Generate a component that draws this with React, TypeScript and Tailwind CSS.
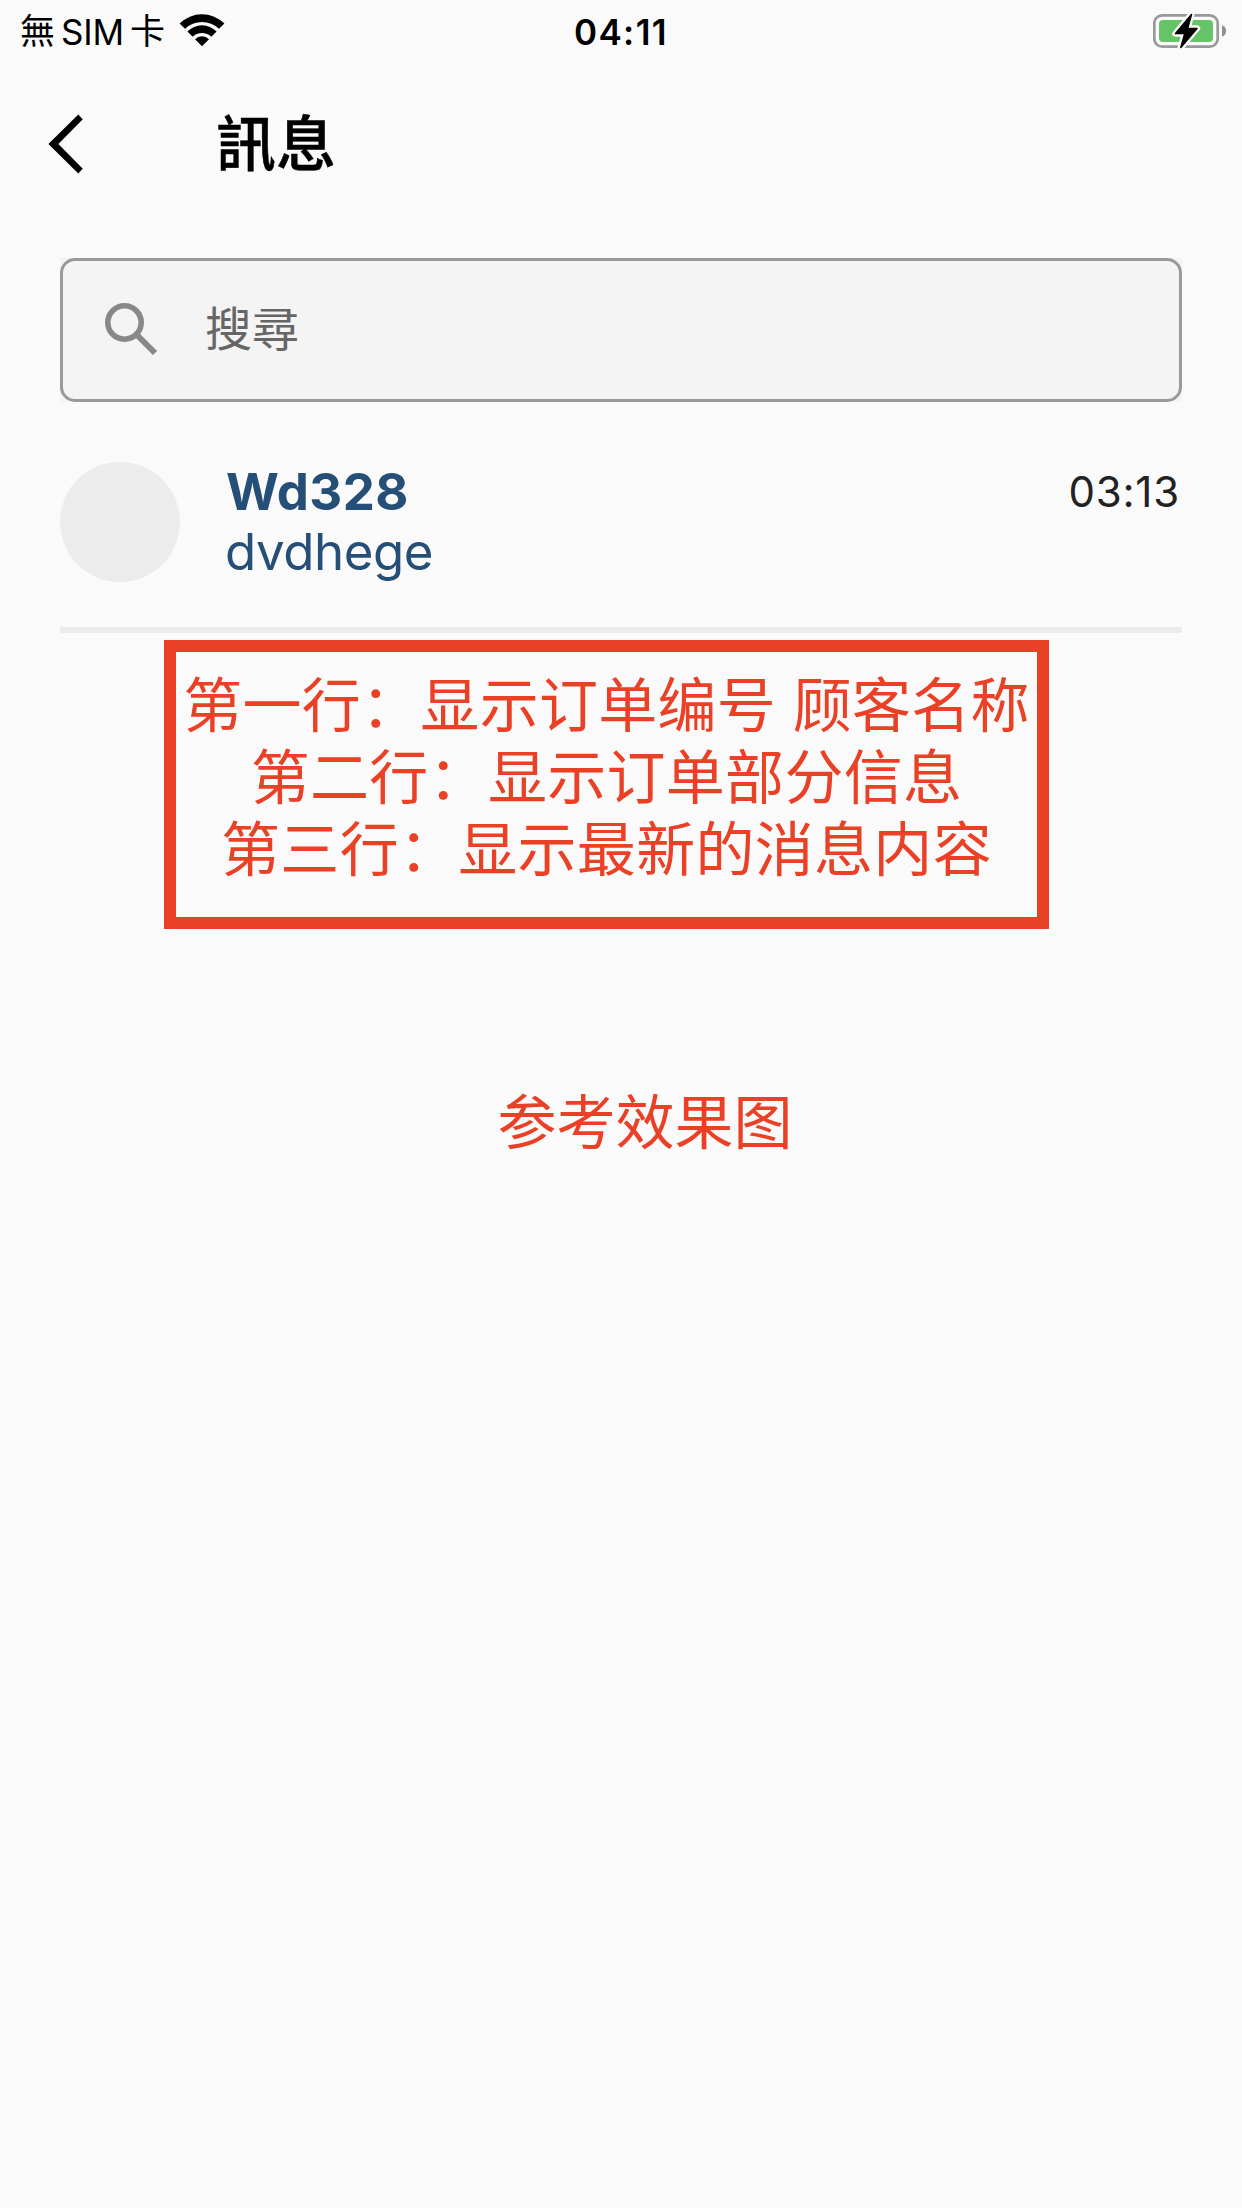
interface Message {
  name: string;
  preview: string;
  time: string;
}

const messages: Message[] = [{ name: 'Wd328', preview: 'dvdhege', time: '03:13' }];

const notes = ['第一行：显示订单编号 顾客名称', '第二行：显示订单部分信息', '第三行：显示最新的消息内容'];

function WifiIcon() {
  return (
    <svg width="46" height="34" viewBox="0 0 46 34" className="ml-[14px]">
      <path d="M.6 9.6A31.5 31.5 0 0 1 45.4 9.6L40 14.8A24.4 24.4 0 0 0 6 14.8Z" />
      <path d="M8.4 17.4A20.7 20.7 0 0 1 37.6 17.4L32.3 22.7A13.4 13.4 0 0 0 13.7 22.7Z" />
      <path d="M16 25.2A9.9 9.9 0 0 1 30 25.2L23 32.2Z" />
    </svg>
  );
}

function BatteryIcon() {
  return (
    <svg width="74" height="36" viewBox="0 0 74 36">
      <rect x="1.3" y="2.3" width="63.4" height="31.4" rx="8" fill="none" stroke="#999" strokeWidth="2.7" />
      <rect x="6" y="7" width="54" height="22" rx="4" fill="#65c466" />
      <path d="M69 12.2C74.5 14 74.5 22 69 23.8Z" fill="#8f8f8f" />
      <path
        d="M38.5 1L22.2 20.8H31.5L27.5 35L44.2 15.2H34.8Z"
        fill="#000"
        stroke="#fafafa"
        strokeWidth="6"
        strokeLinejoin="round"
        paintOrder="stroke"
      />
      <path d="M38.5 1.5L22.5 20.5H31.8L27.8 34.5L44 15.5H34.6Z" stroke="#000" strokeWidth="1.5" strokeLinejoin="round" />
    </svg>
  );
}

function StatusBar() {
  return (
    <div className="grid h-[60px] grid-cols-3 items-center text-black">
      <div className="flex items-center pl-5 text-[35px] leading-[60px]">
        <span>無</span>
        <span className="ml-1.5 pt-0.5 tracking-[-0.2px]">SIM</span>
        <span className="ml-1.5">卡</span>
        <WifiIcon />
      </div>
      <div className="pt-0.5 text-center text-[35px] leading-[58px] font-semibold tracking-[1.4px]">04:11</div>
      <div className="flex justify-end pr-[15px]">
        <BatteryIcon />
      </div>
    </div>
  );
}

function Header() {
  return (
    <header className="flex h-[168px] items-center text-black">
      <svg width="36" height="60" viewBox="0 0 36 60" className="ml-12">
        <path d="M30.3.4L34.8 5.2L10.4 30L34.8 54.8L30.3 59.6L.4 30Z" />
      </svg>
      <h1 className="ml-[132px] text-[60px] leading-none font-medium [-webkit-text-stroke:0.5px_#000]">訊息</h1>
    </header>
  );
}

function SearchBox() {
  return (
    <div className="mx-[60px] mt-[30px] bg-[#f4f4f4]">
      <div className="flex h-36 items-center rounded-[15px] border-3 border-[#999]">
        <svg width="54" height="54" viewBox="0 0 54 54" className="ml-[41px]" fill="none" stroke="#888">
          <circle cx="20.5" cy="19.5" r="16.7" strokeWidth="5.6" />
          <path d="M33.5 32.5L51 50" strokeWidth="6" />
        </svg>
        <span className="ml-[47px] pb-1 text-[47px] leading-none text-[#666]">搜尋</span>
      </div>
    </div>
  );
}

function MessageRow({ name, preview, time }: Message) {
  return (
    <div className="mx-[60px] mt-[60px] flex h-[171px] items-start border-b-6 border-[#ececec]">
      <div className="size-[120px] rounded-full bg-[#ececec]" />
      <div className="ml-[46px] flex-1 text-[#264f78]">
        <div className="text-[51px] leading-[60px] font-bold tracking-[0.4px]">{name}</div>
        <div className="-ml-px text-[51px] leading-[60px] tracking-[-0.45px]">{preview}</div>
      </div>
      <div className="pr-0.5 text-[42px] leading-[60px] tracking-[0.8px] text-[#222]">{time}</div>
    </div>
  );
}

export default function App() {
  return (
    <div className="h-[2208px] w-[1242px] overflow-hidden bg-[#fafafa] font-['Inter','Noto_Sans_CJK_TC',sans-serif]">
      <StatusBar />
      <Header />
      <SearchBox />
      {messages.map((m) => (
        <MessageRow key={m.name} {...m} />
      ))}

      <div
        lang="zh-CN"
        className="text-center font-['Noto_Sans_CJK_SC',sans-serif] text-[59px] leading-[72px] whitespace-nowrap text-[#ea4025]"
      >
        <div className="mt-[7px] ml-[164px] flex h-[289px] w-[885px] flex-col items-center border-12 border-[#ea4025] pt-3.5 tracking-[0.3px] [word-spacing:3px]">
          {notes.map((note) => (
            <p key={note}>{note}</p>
          ))}
        </div>
        <p className="mt-[154px] ml-[48px]">参考效果图</p>
      </div>
    </div>
  );
}
